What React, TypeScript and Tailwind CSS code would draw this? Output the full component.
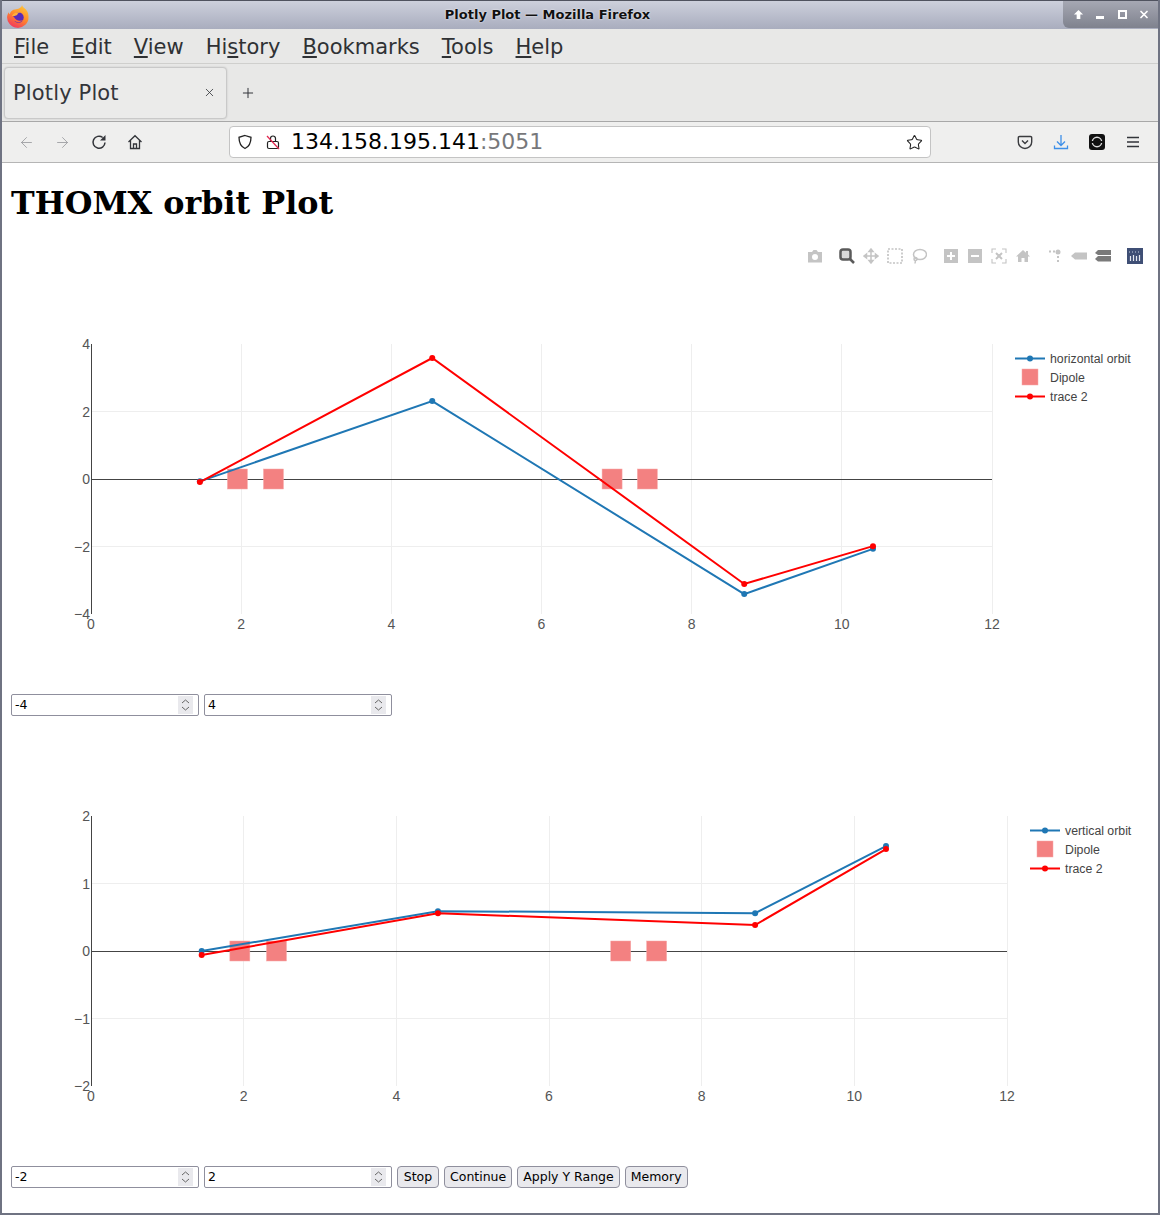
import { ArrowLeft, ArrowRight, Plus, Star, X } from "lucide-react";

const ui = { fontFamily: '"DejaVu Sans", sans-serif' };

const orbitX = [1.45, 4.545, 8.7, 10.415];
const dipoles = [1.95, 2.43, 6.94, 7.41];

function FirefoxLogo() {
  return (
    <svg width="24" height="24" viewBox="0 0 24 24" className="absolute left-[4px] top-[3px]">
      <defs>
        <linearGradient id="fx" x1="0.8" y1="0" x2="0.3" y2="1">
          <stop offset="0" stopColor="#ffc93a" />
          <stop offset="0.5" stopColor="#ff8a2a" />
          <stop offset="1" stopColor="#f2355f" />
        </linearGradient>
      </defs>
      <path d="M16 1c.5 2.500 3.500 3.500 5 6 1.200 2 1.500 4 1.500 6a10.700 10.500 0 1 1-21.300-1c.3-1.500.8-2.800 1.600-3.800.1 1 .4 1.600 1 2C4.500 7 7 5.500 9 5.500c3-.5 6.500-1.500 7-4.500z" fill="url(#fx)" />
      <circle cx="12.500" cy="13.500" r="5.200" fill="#5a2bb8" />
      <path d="M6 12c1-3 5-4.500 8.500-3.500-2 .3-3 1.200-3.300 2.500-1.800 1-3.500 1-5.200 1z" fill="#ffb03a" />
      <path d="M5.500 13c1.500 5 8 7 12 3-4 1.500-8 .5-9.500-3z" fill="#ff6a3a" />
    </svg>
  );
}

function TitleBar() {
  return (
    <div className="relative flex h-[29px] items-center justify-center border-t border-[#50535f] bg-gradient-to-b from-[#cdd0dc] to-[#a9adbe] pr-[65px]">
      <FirefoxLogo />
      <span className="text-[13px] font-bold text-[#111] [text-shadow:0_0_2px_#fff]">Plotly Plot — Mozilla Firefox</span>
      <div className="absolute right-0 top-0 flex h-[27px] w-[95px] items-center gap-[10px] rounded-bl-[6px] bg-gradient-to-b from-[#a6a8b3] to-[#7f828e] pl-[9px] text-white">
        <span className="flex w-[12px] justify-center">
          <svg width="11" height="11" viewBox="0 0 12 12" fill="#fff"><path d="M6 1l5 5H8v5H4V6H1z" /></svg>
        </span>
        <span className="flex w-[12px] justify-center">
          <span className="mt-[6px] h-[3px] w-[8px] bg-white" />
        </span>
        <span className="flex w-[12px] justify-center">
          <span className="h-[9px] w-[9px] border-2 border-white" />
        </span>
        <span className="flex w-[12px] justify-center">
          <X size={13} strokeWidth={3.500} />
        </span>
      </div>
    </div>
  );
}

function MenuBar() {
  const items: [string, string, string][] = [
    ["", "F", "ile"],
    ["", "E", "dit"],
    ["", "V", "iew"],
    ["Hi", "s", "tory"],
    ["", "B", "ookmarks"],
    ["", "T", "ools"],
    ["", "H", "elp"],
  ];
  return (
    <div className="flex h-[35px] items-center gap-[22px] border-b border-[#cfcfcd] bg-[#e8e8e7] pl-[12px] pt-[4px] text-[21px] text-[#2f3134]">
      {items.map(([a, u, b]) => (
        <span key={b}>
          {a}
          <span className="underline underline-offset-2">{u}</span>
          {b}
        </span>
      ))}
    </div>
  );
}

function TabBar() {
  return (
    <div className="flex h-[58px] items-center border-b border-[#a8a8a8] bg-[#e8e8e7] pl-[2px]">
      <div className="flex h-[52px] w-[223px] items-center justify-between rounded-[4px] border border-[#c9c9c9] bg-[#ebebea] pl-[8px] pr-[10px] text-[#33353a] shadow-[0_0_2px_rgba(0,0,0,0.15)]">
        <span className="pt-[2px] text-[21px] tracking-[0.15px]">Plotly Plot</span>
        <X size={13} strokeWidth={1.500} />
      </div>
      <Plus size={16} strokeWidth={1.500} className="ml-[13px] text-[#33353a]" />
    </div>
  );
}

function Toolbar() {
  return (
    <div className="relative flex h-[41px] items-center border-b border-[#b5b5b5] bg-[#efefee]">
      <div className="flex w-[227px] items-center pl-[16px]">
        <ArrowLeft size={17} strokeWidth={1.200} className="text-[#9a9b9e]" />
        <ArrowRight size={17} strokeWidth={1.200} className="ml-[19px] text-[#9a9b9e]" />
        <svg width="16" height="16" viewBox="0 0 16 16" fill="none" stroke="#33353a" strokeWidth="1.500" className="ml-[20px]">
          <path d="M14 8.500a6 6 0 1 1-2.300-5" />
          <path d="M14.500 1v5.500H9z" fill="#33353a" stroke="none" />
        </svg>
        <svg width="16" height="16" viewBox="0 0 16 16" fill="none" stroke="#33353a" strokeWidth="1.300" className="ml-[20px]">
          <path d="M1.500 8L8 1.700 14.500 8M3.500 6.500V14.500h9V6.500M6.500 14.500V10h3v4.500" />
        </svg>
      </div>
      <div className="flex h-[32px] w-[702px] items-center rounded-[4px] border border-[#c4c4c4] bg-white pl-[7px] pr-[7px]">
        <svg width="16" height="16" viewBox="0 0 16 16" fill="none" stroke="#222" strokeWidth="1.300">
          <path d="M8 1.500l6 1.800c0 5-1 9-6 11.200C3 12.300 2 8.300 2 3.300z" />
        </svg>
        <svg width="16" height="16" viewBox="0 0 16 16" fill="none" stroke="#222" strokeWidth="1.200" className="ml-[12px]">
          <rect x="2.500" y="7.500" width="11" height="7" rx="1.500" />
          <path d="M5.500 7.500V4.500a2.500 2.500 0 0 1 5 0v3" />
          <path d="M2 2l12 13" stroke="#e22850" />
        </svg>
        <span className="ml-[10px] text-[22px] leading-none text-black">
          134.158.195.141<span className="text-[#77787b]">:5051</span>
        </span>
        <Star size={17} strokeWidth={1.500} className="ml-auto text-[#222]" />
      </div>
      <div className="ml-[86px] flex items-center gap-[20px]">
        <svg width="16" height="16" viewBox="0 0 16 16" fill="none" stroke="#3a3b3e" strokeWidth="1.400">
          <path d="M2.500 2.500h11A1.200 1.200 0 0 1 14.700 3.700V8a6.700 6.500 0 0 1-13.400 0V3.700A1.200 1.200 0 0 1 2.500 2.500z" />
          <path d="M5 6.500l3 3 3-3" />
        </svg>
        <svg width="16" height="16" viewBox="0 0 16 16" fill="none" stroke="#3d8fe8" strokeWidth="1.300">
          <path d="M8 1v10M4 7.500L8 11.500l4-4M1.500 11.500v3h13v-3" />
        </svg>
        <svg width="16" height="16" viewBox="0 0 16 16">
          <rect width="16" height="16" rx="3" fill="#111" />
          <circle cx="8" cy="8" r="4.700" fill="none" stroke="#ddd" strokeWidth="1.400" />
          <path d="M1 8h14" stroke="#111" strokeWidth="2" />
        </svg>
        <svg width="16" height="16" viewBox="0 0 16 16" stroke="#33353a" strokeWidth="1.300">
          <path d="M2 3.500h12M2 8h12M2 12.500h12" />
        </svg>
      </div>
    </div>
  );
}

function ModeBar() {
  const c = "#c4c4c4";
  const d = "#7a7a7a";
  const groups = [
    [<path key="a" d="M1 4h4l1.500-2h3L11 4h4v10.500H1z M8 6a3 3 0 1 0 0 6 3 3 0 0 0 0-6z" fill={c} fillRule="evenodd" />],
    [
      <g key="b">
        <rect x="1.500" y="1.500" width="10" height="10" rx="2.500" fill="#d8d8d8" stroke="#5a5a5a" strokeWidth="2.500" />
        <path d="M11 11l4 4" stroke="#5a5a5a" strokeWidth="2.500" />
      </g>,
      <path key="c" d="M8 1v14M1 8h14M8 1L6 3.500h4zM8 15l-2-2.500h4zM1 8l2.500-2v4zM15 8l-2.500-2v4z" stroke={c} strokeWidth="1.500" fill={c} />,
      <rect key="d" x="1" y="1" width="14" height="14" fill="none" stroke={c} strokeWidth="1.700" strokeDasharray="2 1.500" />,
      <g key="e" fill="none" stroke={c} strokeWidth="1.500">
        <ellipse cx="9" cy="6.500" rx="6.500" ry="5" />
        <circle cx="4.500" cy="11" r="1.500" />
        <path d="M4.500 12.500L4 15.500" />
      </g>,
    ],
    [
      <path key="f" d="M1 1h14v14H1z M7 4v3H4v2h3v3h2V9h3V7H9V4z" fill={c} fillRule="evenodd" />,
      <path key="g" d="M1 1h14v14H1z M4 7v2h8V7z" fill={c} fillRule="evenodd" />,
      <g key="h" fill="none" stroke={c} strokeWidth="1.100">
        <path d="M1 5V1h4M11 1h4v4M15 11v4h-4M5 15H1v-4" />
        <path d="M5 5l6 6M11 5l-6 6" strokeWidth="2" />
      </g>,
      <path key="i" d="M8 2L1 8.500h2V14h3.500v-4h3v4H13V8.500h2l-2-1.900V3h-2v1.700z" fill={c} />,
    ],
    [
      <g key="j" fill={c}>
        <circle cx="11" cy="4" r="2.500" />
        <rect x="2" y="2.500" width="2" height="2" />
        <rect x="6" y="2.500" width="2" height="2" />
        <rect x="10" y="8" width="2" height="2" />
        <rect x="10" y="12" width="2" height="2" />
      </g>,
      <path key="k" d="M0 8l4-3.500h12v7H4z" fill={c} />,
      <g key="l" fill={d}>
        <path d="M0 5l3-3h13v5H3z" />
        <path d="M0 11l3-3h13v5.500H3z" />
      </g>,
    ],
    [
      <g key="m">
        <rect width="16" height="16" fill="#3f4f75" />
        <path d="M3.500 8v5M6.500 7v6M9.500 8v5M12.500 7v6" stroke="#e4e8f0" strokeWidth="1.200" />
        <path d="M2 4h12" stroke="#c4cde0" strokeDasharray="1 2" />
      </g>,
    ],
  ];
  return (
    <div className="absolute right-[8px] top-[4px] flex gap-[16px]">
      {groups.map((icons, i) => (
        <div key={i} className="flex gap-[8px]">
          {icons.map((icon, j) => (
            <svg key={j} width="16" height="16" viewBox="0 0 16 16">
              {icon}
            </svg>
          ))}
        </div>
      ))}
    </div>
  );
}

type ChartProps = {
  plotWidth: number;
  yMax: number;
  yStep: number;
  blue: number[];
  red: number[];
  name: string;
  legendX: number;
  modeBar?: boolean;
};

function Chart({ plotWidth, yMax, yStep, blue, red, name, legendX, modeBar }: ChartProps) {
  const px = (v: number) => 80 + (v / 12) * plotWidth;
  const py = (v: number) => 100 + ((yMax - v) / (2 * yMax)) * 270;
  const yTicks = [yMax, yMax / 2, 0, -yMax / 2, -yMax];
  const line = (vals: number[]) => orbitX.map((x, i) => `${px(x)},${py(vals[i])}`).join(" ");
  const legend = ["#1f77b4", "", "#ff0000"];
  return (
    <div className="relative h-[450px] w-[1140px]">
      {modeBar && <ModeBar />}
      <svg width="1140" height="450" className="block" style={{ fontFamily: '"Liberation Sans", Arial, sans-serif' }}>
        {[2, 4, 6, 8, 10, 12].map((t) => (
          <line key={t} x1={Math.floor(px(t)) + 0.500} x2={Math.floor(px(t)) + 0.500} y1={100} y2={370} stroke="#eee" />
        ))}
        {yTicks.filter((t) => Math.abs(t) === yStep).map((t) => (
          <line key={t} x1={80} x2={80 + plotWidth} y1={Math.floor(py(t)) + 0.500} y2={Math.floor(py(t)) + 0.500} stroke="#eee" />
        ))}
        <line x1={80} x2={80 + plotWidth} y1={py(0) + 0.500} y2={py(0) + 0.500} stroke="#444" />
        <line x1={80.500} x2={80.500} y1={100} y2={370} stroke="#444" />
        {[0, 2, 4, 6, 8, 10, 12].map((t) => (
          <text key={t} x={px(t)} y={385} textAnchor="middle" fontSize="14" fill="#555">{t}</text>
        ))}
        {yTicks.map((t) => (
          <text key={t} x={79} y={py(t) + 5} textAnchor="end" fontSize="14" fill="#555">
            {t < 0 ? `−${-t}` : t}
          </text>
        ))}
        {dipoles.map((d) => (
          <rect key={d} x={px(d) - 10} y={py(0) - 10} width="20" height="20" fill="#f38181" stroke="#f7a9a9" strokeWidth="0.500" />
        ))}
        {[blue, red].map((vals, i) => (
          <g key={i} stroke={i ? "#ff0000" : "#1f77b4"} fill={i ? "#ff0000" : "#1f77b4"}>
            <polyline points={line(vals)} fill="none" strokeWidth="2" />
            {orbitX.map((x, j) => (
              <circle key={x} cx={px(x)} cy={py(vals[j])} r="3" stroke="none" />
            ))}
          </g>
        ))}
        {[name, "Dipole", "trace 2"].map((label, i) => (
          <g key={label}>
            <text x={legendX + 35} y={119 + i * 19} fontSize="12.300" fill="#444">{label}</text>
            {legend[i] ? (
              <g stroke={legend[i]} fill={legend[i]}>
                <line x1={legendX} x2={legendX + 30} y1={114.500 + i * 19} y2={114.500 + i * 19} strokeWidth="2" />
                <circle cx={legendX + 15} cy={114.500 + i * 19} r="3" stroke="none" />
              </g>
            ) : (
              <rect x={legendX + 7} y={125} width="16" height="16" fill="#f38181" stroke="#f7a9a9" strokeWidth="0.500" />
            )}
          </g>
        ))}
      </svg>
    </div>
  );
}

function NumberField({ value }: { value: string }) {
  return (
    <div className="flex h-[22px] w-[188px] items-center rounded-[2px] border border-[#8f8f9d] bg-white pl-[3px] pr-[5px]">
      <input readOnly value={value} className="w-0 flex-1 pt-[1px] text-[12.500px] text-black outline-none" style={ui} />
      <div className="flex h-[18px] w-[15px] items-center justify-center bg-[#e9e9ed]">
        <svg width="9" height="14" viewBox="0 0 9 14" fill="none" stroke="#666" strokeWidth="1">
          <path d="M1 5l3.500-3L8 5M1 9l3.500 3L8 9" />
        </svg>
      </div>
    </div>
  );
}

function Button({ children }: { children: string }) {
  return (
    <button className="h-[22px] min-w-[42px] rounded-[4px] border border-[#8f8f9d] bg-[#e9e9ed] px-[5px] pt-[1px] text-[12.500px] leading-none text-black">
      {children}
    </button>
  );
}

export default function App() {
  return (
    <div className="h-[1215px] w-[1160px] overflow-hidden border-x-2 border-b-2 border-[#6f7382] bg-white" style={ui}>
      <TitleBar />
      <MenuBar />
      <TabBar />
      <Toolbar />
      <main className="pl-[9px]">
        <h1 className="pb-[22px] pt-[21px] text-[31.800px] font-bold leading-[38px] text-black" style={{ fontFamily: '"DejaVu Serif", serif' }}>
          THOMX orbit Plot
        </h1>
        <Chart
          modeBar
          plotWidth={901}
          yMax={4}
          yStep={2}
          name="horizontal orbit"
          legendX={1004}
          blue={[-0.07, 2.31, -3.41, -2.07]}
          red={[-0.09, 3.585, -3.11, -1.99]}
        />
        <div className="flex h-[22px] gap-[5px]">
          <NumberField value="-4" />
          <NumberField value="4" />
        </div>
        <Chart
          plotWidth={916}
          yMax={2}
          yStep={1}
          name="vertical orbit"
          legendX={1019}
          blue={[0, 0.59, 0.56, 1.555]}
          red={[-0.06, 0.56, 0.385, 1.51]}
        />
        <div className="flex h-[22px] gap-[5px]">
          <NumberField value="-2" />
          <NumberField value="2" />
          <Button>Stop</Button>
          <Button>Continue</Button>
          <Button>Apply Y Range</Button>
          <Button>Memory</Button>
        </div>
      </main>
    </div>
  );
}
